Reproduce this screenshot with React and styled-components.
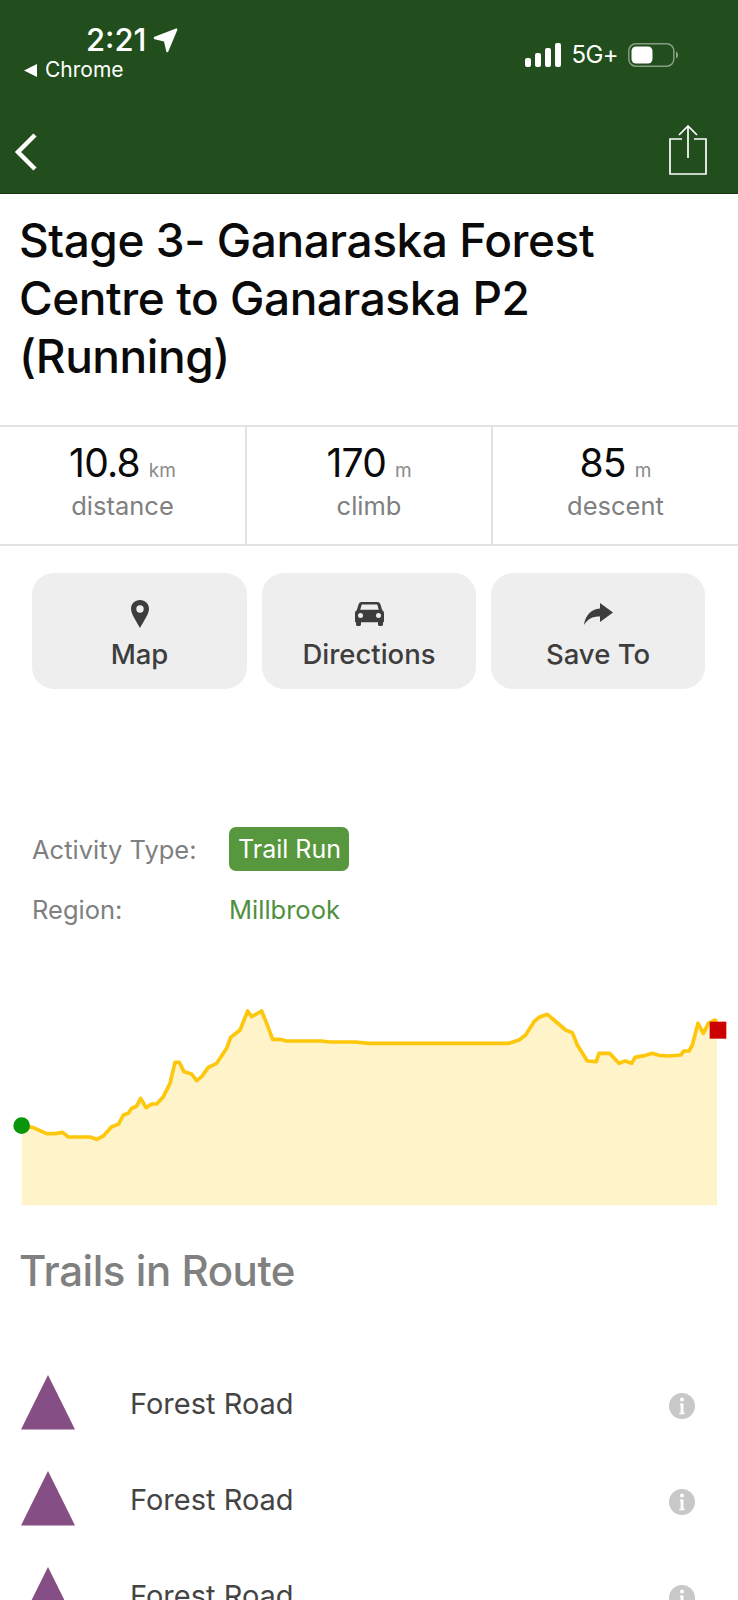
import React from "react";
import styled, { createGlobalStyle } from "styled-components";

const Global = createGlobalStyle`
  html, body { margin: 0; padding: 0; background: #fff; }
  * { box-sizing: border-box; }
  body { font-family: Inter, "Liberation Sans", sans-serif; }
`;

const Page = styled.div`
  width: 738px;
  height: 1600px;
  overflow: hidden;
  background: #fff;
`;

const Header = styled.header`
  height: 194px;
  background: #214e1c;
  border-bottom: 1px solid #16330f;
  color: #fff;
  display: flex;
  flex-direction: column;
`;

const StatusBar = styled.div`
  height: 114px;
  display: flex;
  justify-content: space-between;
  align-items: flex-start;
  padding: 23px 60px 0 24px;
`;

const StatusLeft = styled.div`
  display: flex;
  flex-direction: column;
`;

const TimeRow = styled.div`
  display: flex;
  align-items: center;
  gap: 7px;
  margin-left: 62px;
  height: 34px;
`;

const Time = styled.span`
  font-size: 31px;
  font-weight: 500;
  line-height: 34px;
`;

const BackApp = styled.div`
  display: flex;
  align-items: center;
  gap: 8px;
  height: 24px;
  margin-top: 1px;
`;

const BackAppName = styled.span`
  font-size: 21px;
  font-weight: 400;
  line-height: 24px;
`;

const StatusRight = styled.div`
  display: flex;
  align-items: center;
  gap: 10px;
  margin-top: 20px;
  height: 24px;
`;

const Network = styled.span`
  font-size: 24px;
  font-weight: 400;
  letter-spacing: -0.6px;
  line-height: 24px;
`;

const NavBar = styled.div`
  flex: 1;
  display: flex;
  justify-content: space-between;
  align-items: flex-start;
  padding: 11px 31px 0 14px;
`;

const BackChevron = styled.svg`
  margin-top: 8px;
`;

const Title = styled.h1`
  margin: 0;
  padding: 17px 19px 0;
  height: 231px;
  font-size: 46px;
  font-weight: 500;
  line-height: 58px;
  letter-spacing: -0.45px;
  color: #0a0a0a;
`;

const Stats = styled.section`
  display: grid;
  grid-template-columns: 245px 246px 1fr;
  height: 121px;
  border-top: 2px solid #e2e2e2;
  border-bottom: 2px solid #e2e2e2;
`;

const Stat = styled.div`
  display: flex;
  flex-direction: column;
  align-items: center;
  padding-top: 14px;
  border-left: ${(p) => (p.$first ? "none" : "2px solid #e2e2e2")};
`;

const StatValue = styled.div`
  display: flex;
  align-items: baseline;
  gap: 9px;
  height: 44px;
  line-height: 44px;
`;

const Number = styled.span`
  font-size: 39px;
  font-weight: 400;
  letter-spacing: -0.8px;
  color: #0a0a0a;
`;

const Unit = styled.span`
  font-size: 19px;
  color: #8a8a8a;
`;

const StatLabel = styled.div`
  font-size: 25.5px;
  line-height: 30px;
  margin-top: 6px;
  color: #808080;
`;

const Actions = styled.section`
  display: grid;
  grid-template-columns: 215px 214px 214px;
  gap: 15px;
  padding: 27px 33px 0 32px;
`;

const ActionButton = styled.button`
  height: 116px;
  border: 0;
  border-radius: 22px;
  background: #eeeeee;
  display: flex;
  flex-direction: column;
  align-items: center;
  padding: 26px 0 0;
  font-family: inherit;
`;

const IconSlot = styled.span`
  height: 30px;
  display: flex;
  align-items: center;
  justify-content: center;
`;

const ActionLabel = styled.span`
  margin-top: 9px;
  font-size: 27.5px;
  line-height: 32px;
  font-weight: 450;
  color: #3d3d3d;
`;

const Meta = styled.section`
  margin-top: 138px;
  padding-left: 32px;
  display: grid;
  grid-template-columns: 197px 1fr;
  grid-auto-rows: 44px;
  row-gap: 16px;
  align-items: center;
`;

const MetaLabel = styled.span`
  font-size: 25.5px;
  color: #7f7f7f;
`;

const Badge = styled.span`
  justify-self: start;
  height: 44px;
  line-height: 44px;
  padding: 0 8px 0 9px;
  border-radius: 7px;
  background: #57973e;
  color: #fff;
  font-size: 25px;
`;

const RegionLink = styled.span`
  font-size: 25.5px;
  color: #4f9040;
`;

const Chart = styled.svg`
  display: block;
  width: 738px;
  height: 240px;
  margin-top: 49px;
`;

const Heading = styled.h2`
  margin: 0;
  padding: 25px 19px 0;
  height: 155px;
  font-size: 42px;
  line-height: 52px;
  font-weight: 500;
  letter-spacing: -0.45px;
  color: #808080;
`;

const TrailRow = styled.div`
  height: 96px;
  display: grid;
  grid-template-columns: 109px 1fr 26px;
  align-items: flex-start;
  padding: 0 43px 0 21px;
`;

const TrailName = styled.span`
  font-size: 29px;
  line-height: 36px;
  color: #444;
  margin-top: 11px;
`;

const InfoSlot = styled.span`
  display: block;
  margin-top: 18px;
  height: 26px;
`;

const pts = [[65,437],[100,443],[140,461],[165,461],[188,457],[205,471],[270,471],[290,478],[310,468],[335,440],[355,433],[370,405],[385,400],[395,385],[410,378],[422,355],[438,383],[455,372],[470,372],[490,350],[510,310],[525,247],[538,247],[552,275],[575,282],[590,302],[605,290],[625,262],[650,250],[680,205],[692,172],[720,150],[743,93],[755,110],[785,93],[800,130],[818,178],[840,178],[860,183],[965,183],[990,186],[1065,186],[1107,190],
  [1527,190],[1557,180],[1577,165],[1602,125],[1617,112],[1642,103],[1662,120],[1697,150],[1717,158],[1732,195],[1762,243],[1789,245],[1797,220],[1829,220],[1857,250],[1875,243],[1895,250],[1905,232],[1937,226],[1957,220],[1977,226],[2007,228],[2042,225],[2052,213],[2067,213],[2077,195],[2094,130],[2110,160],[2125,130],[2145,120],[2151,125]];
const line = pts.map((p) => p.join(",")).join(" ");
const area = `65,676 ${line} 2151,676`;

const Triangle = () => (
  <svg width="54" height="55" viewBox="0 0 54 55"><polygon points="27,0 54,54.5 0,54.5" fill="#854f85" /></svg>
);

const Info = () => (
  <svg width="26" height="26" viewBox="0 0 26 26">
    <circle cx="13" cy="13" r="13" fill="#c8c8c8" />
    <circle cx="13" cy="6.500" r="2" fill="#fff" />
    <path d="M10.800 10.500h3.700v9.200h1.200v1.500h-5.400v-1.500h1.300v-7.700h-.8z" fill="#fff" />
  </svg>
);

const Signal = () => (
  <svg width="36" height="24" viewBox="0 0 36 24" fill="#fff">
    <rect x="0" y="15" width="6" height="9" rx="2" />
    <rect x="10" y="10" width="6" height="14" rx="2" />
    <rect x="20" y="5" width="6" height="19" rx="2" />
    <rect x="30" y="0" width="6" height="24" rx="2" />
  </svg>
);

const Battery = () => (
  <svg width="50" height="24" viewBox="0 0 50 24">
    <rect x="0.8" y="0.8" width="45" height="22.4" rx="7" fill="none" stroke="#fff" strokeOpacity=".45" strokeWidth="1.5" />
    <rect x="3.5" y="3.5" width="21" height="17" rx="4.5" fill="#fff" />
    <path d="M48 8.5c1.4.6 2 2 2 3.5s-.6 2.900-2 3.500z" fill="#fff" fillOpacity=".5" />
  </svg>
);

const Arrow = () => (
  <svg width="25" height="25" viewBox="0 0 25 25"><path d="M1.500 8.800 23 .5c1-.3 1.700.4 1.300 1.400L15.300 23.500c-.5 1-1.700 1-2-.1L11 13.500 1.600 11.300C.4 11 .3 9.300 1.500 8.800z" fill="#fff" /></svg>
);

const Pin = () => (
  <svg width="18" height="28" viewBox="0 0 18 28"><path fillRule="evenodd" d="M9 0c5 0 9 3.900 9 8.800 0 5.300-5.400 12.600-9 19.200C5.400 21.400 0 14.100 0 8.800 0 3.900 4 0 9 0zm0 5.300a3.700 3.700 0 1 0 0 7.400 3.700 3.700 0 0 0 0-7.400z" fill="#3d3d3d" /></svg>
);

const Car = () => (
  <svg width="29" height="24" viewBox="0 0 29 24"><path fillRule="evenodd" d="M6.500 0h16c1.300 0 2.300.8 2.800 2l2 6.200c1 .6 1.700 1.700 1.700 3V19.500c0 .5-.4.800-.8.800H28v2.200c0 .8-.7 1.500-1.500 1.500h-2c-.8 0-1.500-.7-1.500-1.500v-2.200H6v2.200C6 23.300 5.300 24 4.500 24h-2C1.700 24 1 23.300 1 22.500v-2.200h-.2c-.4 0-.8-.3-.8-.8v-8.300c0-1.300.7-2.400 1.700-3l2-6.200C4.200.800 5.200 0 6.500 0zM6.800 2.500 5.200 7.800h18.600l-1.600-5.300zM5.500 11a2.500 2.500 0 1 0 0 5 2.500 2.500 0 0 0 0-5zm18 0a2.500 2.500 0 1 0 0 5 2.500 2.500 0 0 0 0-5z" fill="#3d3d3d" /></svg>
);

const ShareArrow = () => (
  <svg width="29" height="22" viewBox="0 0 29 22"><path d="M16 0l13 9.500L16 19v-5.500C8 13.500 3.500 16 0 22 1 13 7 6 16 5.500z" fill="#3d3d3d" /></svg>
);

const stats = [
  { value: "10.8", unit: "km", label: "distance" },
  { value: "170", unit: "m", label: "climb" },
  { value: "85", unit: "m", label: "descent" },
];

export default function App() {
  return (
    <Page>
      <Global />
      <Header>
        <StatusBar>
          <StatusLeft>
            <TimeRow>
              <Time>2:21</Time>
              <Arrow />
            </TimeRow>
            <BackApp>
              <svg width="13" height="13" viewBox="0 0 13 13"><polygon points="0,6.500 13,0 13,13" fill="#fff" /></svg>
              <BackAppName>Chrome</BackAppName>
            </BackApp>
          </StatusLeft>
          <StatusRight>
            <Signal />
            <Network>5G+</Network>
            <Battery />
          </StatusRight>
        </StatusBar>
        <NavBar>
          <BackChevron width="24" height="38" viewBox="0 0 24 38"><path d="M21 2 4 19l17 17" fill="none" stroke="#fff" strokeWidth="4.500" /></BackChevron>
          <svg width="38" height="50" viewBox="0 0 38 50" fill="none" stroke="#fff" strokeWidth="1.700">
            <path d="M13 14H1v35h36V14H25" />
            <path d="M19 33V1M10 10l9-9 9 9" />
          </svg>
        </NavBar>
      </Header>
      <Title>Stage 3- Ganaraska Forest Centre to Ganaraska P2 (Running)</Title>
      <Stats>
        {stats.map((s, i) => (
          <Stat key={s.label} $first={i === 0}>
            <StatValue>
              <Number>{s.value}</Number>
              <Unit>{s.unit}</Unit>
            </StatValue>
            <StatLabel>{s.label}</StatLabel>
          </Stat>
        ))}
      </Stats>
      <Actions>
        <ActionButton><IconSlot><Pin /></IconSlot><ActionLabel>Map</ActionLabel></ActionButton>
        <ActionButton><IconSlot><Car /></IconSlot><ActionLabel>Directions</ActionLabel></ActionButton>
        <ActionButton><IconSlot><ShareArrow /></IconSlot><ActionLabel>Save To</ActionLabel></ActionButton>
      </Actions>
      <Meta>
        <MetaLabel>Activity Type:</MetaLabel>
        <Badge>Trail Run</Badge>
        <MetaLabel>Region:</MetaLabel>
        <RegionLink>Millbrook</RegionLink>
      </Meta>
      <Chart viewBox="0 0 2214 720">
        <polygon points={area} fill="#fef3c9" />
        <polyline points={line} fill="none" stroke="#fdc70c" strokeWidth="11" strokeLinejoin="round" />
        <circle cx="65" cy="437" r="25" fill="#0a960a" />
        <rect x="2129" y="125" width="50" height="51" fill="#cc0000" />
      </Chart>
      <Heading>Trails in Route</Heading>
      {[0, 1, 2].map((i) => (
        <TrailRow key={i}>
          <Triangle />
          <TrailName>Forest Road</TrailName>
          <InfoSlot><Info /></InfoSlot>
        </TrailRow>
      ))}
    </Page>
  );
}
